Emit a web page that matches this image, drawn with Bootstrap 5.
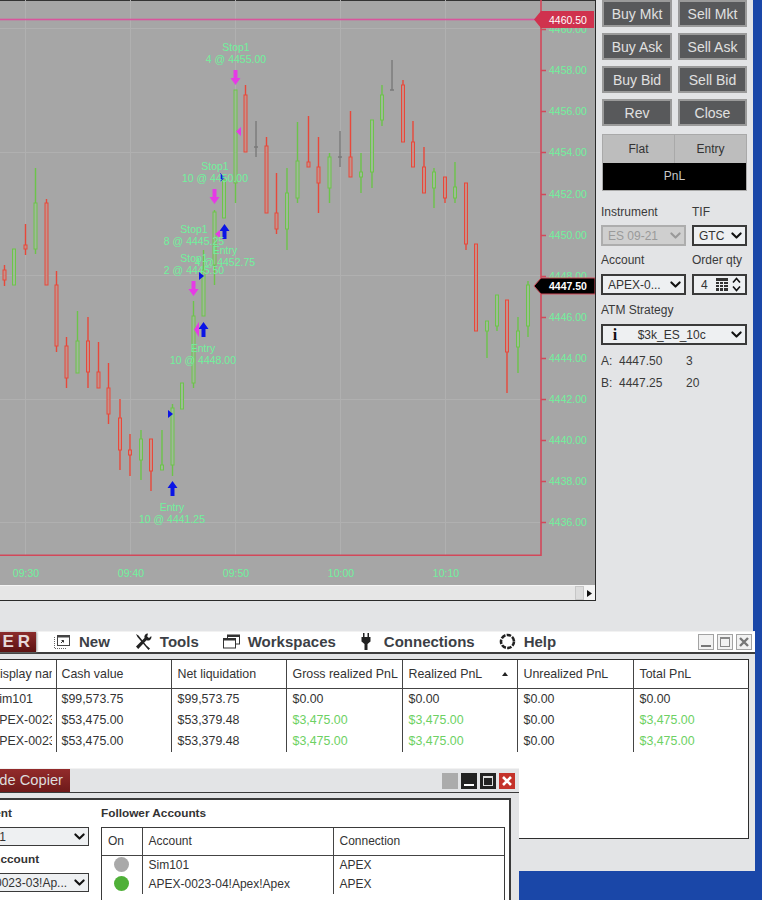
<!DOCTYPE html>
<html lang="en">
<head>
<meta charset="utf-8">
<title>Trading workspace</title>
<link href="https://cdn.jsdelivr.net/npm/bootstrap@5.3.0/dist/css/bootstrap.min.css" rel="stylesheet">
<style>
html,body{margin:0;height:100%;overflow:hidden}
body{background:#1a47a8;font-family:"Liberation Sans",Arial,sans-serif;font-size:12px;color:#333}
.desk{position:relative;width:762px;height:900px;overflow:hidden;background:#1a47a8}
.win-main{position:absolute;left:0;top:0;width:753px;height:632px;background:#e3e4e6}
.chart-box{width:596px;height:601px;border-right:1px solid #2a2a2a;border-bottom:1px solid #2a2a2a;background:#e6e6e6;flex:none}
.chart-box svg{display:block}
.scroll-strip{height:15px;border-top:1px solid #f4f4f4}
.scroll-thumb{width:9px;height:14px;background:#dcdcdc;border:1px solid #c6c6c6}
.scroll-arrow{width:11px;height:14px;background:#f4f4f4}
.ctext{font-family:"Liberation Sans",Arial,sans-serif;font-size:10.5px;fill:#70f29c}
.ctext-c{text-anchor:middle}
.c-up,.c-dn,.c-gr{stroke-width:1}
.c-up path,.c-dn path,.c-gr path{stroke-width:1.4}
.c-up{stroke:#6cc44a;fill:#9fba97}
.c-dn{stroke:#e8483a;fill:#c4928b}
.c-gr{stroke:#7a7a7a;fill:#7a7a7a}
.side-panel{width:157px;padding:0 6px 0 5px}
.trade-grid{display:grid;grid-template-columns:70px 69px;column-gap:6px;row-gap:6px;margin-left:1px}
.trade-btn{height:27px;padding:0;border-radius:0;background:#58595b;border:2px solid #9a9a9a;color:#e0e0e0;font-size:14px;line-height:22px}
.pos-box{margin:8px 0 0 1px;border:1px solid #a9a9a9;font-size:12px;text-align:center}
.pos-cell{height:28px;line-height:28px;background:#bdbdbd;color:#333;flex:1 1 0}
.pos-cell+.pos-cell{border-left:1px solid #a9a9a9}
.pos-pnl{height:27px;line-height:27px;background:#000;color:#c9c9c9}
.field-grid{display:grid;grid-template-columns:85px 55px;column-gap:6px;margin-top:14px}
.field-lbl{height:15px;line-height:15px;font-size:12px;color:#3a3a3a;margin-bottom:5px}
.field-next{margin-top:7px;margin-bottom:6px}
.atm-lbl{margin-top:8px;margin-bottom:6px}
.flat-sel{height:21px;min-height:21px;padding:0 16px 0 5px;border:2px solid #3a3a3a;border-radius:0;font-size:12px;color:#333;background-color:#eef0f2;background-image:url("data:image/svg+xml,%3csvg xmlns='http://www.w3.org/2000/svg' viewBox='0 0 16 16'%3e%3cpath fill='none' stroke='%23111' stroke-linecap='round' stroke-linejoin='round' stroke-width='3' d='m2 5 6 6 6-6'/%3e%3c/svg%3e");background-size:11px 11px;background-position:right 3px center;box-shadow:none}
.flat-sel:disabled{background-color:#cfcfcf;border-color:#adadad;color:#9a9a9a;opacity:1;background-image:url("data:image/svg+xml,%3csvg xmlns='http://www.w3.org/2000/svg' viewBox='0 0 16 16'%3e%3cpath fill='none' stroke='%23999' stroke-linecap='round' stroke-linejoin='round' stroke-width='3' d='m2 5 6 6 6-6'/%3e%3c/svg%3e")}
.qty-box{height:21px;border:2px solid #3a3a3a;background:#eef0f2;font-size:12px;padding-left:7px}
.atm-box{height:21px;border:2px solid #3a3a3a;background:#eef0f2}
.atm-info{width:24px;text-align:center;font-family:"Liberation Serif",serif;font-weight:700;font-size:16px;line-height:17px;color:#111;flex:none}
.atm-sel{border:0;height:17px;min-height:17px;text-align:left}
.quote-wrap{margin-top:5px}
.quote-row{display:grid;grid-template-columns:18px 67px auto;height:22px;line-height:22px;font-size:12px;color:#3a3a3a}
.win-cc{position:absolute;left:-60px;top:631px;width:815px;height:240px;background:#e3e4e6;border-top:1px solid #f2f2f2}
.menu-row{height:19px;background:#fff;border-bottom:2px solid #3d3d3d;box-sizing:content-box;padding:0 3px 1px 0}
.cc-tab{width:96px;height:20px;background:linear-gradient(#8c2c2c,#5c1212);color:#e6dada;font-weight:700;font-size:17px;letter-spacing:4px;line-height:20px;padding-right:2px;overflow:hidden;box-shadow:1px 0 2px #999;flex:none;margin-bottom:-1px}
.cc-tab-txt{flex:none;white-space:nowrap}
.menu-list{gap:24px;margin-left:18px;font-weight:700;font-size:15px;color:#3c3f46}
.menu-item{gap:8px;line-height:20px}
.cc-btns{gap:3px}
.wbtn{width:16px;height:16px;display:block}
.frame-tbl{margin:5px 6px 0 0;height:180px;border:1px solid #2e2e2e;border-left:0;background:#fff}
.acct-tbl{table-layout:fixed;width:809px;margin:0;font-size:12.4px;color:#333;--bs-table-bg:transparent}
.acct-tbl th,.acct-tbl td{padding:0 5px 0 6px;white-space:nowrap;overflow:hidden;font-weight:400;border:0;border-right:1px solid #444}
.acct-tbl th:last-child,.acct-tbl td:last-child{border-right:0}
.acct-tbl th{height:28px;border-bottom:1px solid #444;line-height:28px}
.acct-tbl td{height:21px;line-height:21px}
.acct-tbl th:first-child,.acct-tbl td:first-child{padding:0 4px 0 51px}
.acct-tbl th:nth-child(2),.acct-tbl td:nth-child(2){padding-left:5px}
.clip-txt{display:block;overflow:hidden}
.money-up{color:#6dd163!important}
.sort-mark{width:0;height:0;border-left:3.5px solid transparent;border-right:3.5px solid transparent;border-bottom:4px solid #222}
.win-tc{position:absolute;left:-80px;top:768px;width:599px;height:132px;background:#e3e4e6;border-top:1px solid #f2f2f2}
.tc-head{height:24px;border-bottom:1px solid #3a3a3a}
.tc-tab{width:150px;height:23px;background:linear-gradient(#932b2b,#6e1a1a);color:#ddd;font-size:14.7px;line-height:23px;text-align:right;padding-right:7px;white-space:nowrap}
.tc-btns{gap:3px;margin-right:4px}
.tc-panel{margin:5px 8px 0 0;height:120px;border:2px solid #3a3a3a;border-bottom:0;border-left:0;background:#fff;padding:6px 4px 0 31px;gap:12px}
.tc-left{width:138px;flex:none}
.tc-lbl{font-weight:700;font-size:11.8px;line-height:15px;color:#333;margin-bottom:6px}
.tc-sel{height:19px;min-height:19px;padding:0 14px 0 7px;border:1px solid #3a3a3a;margin-bottom:6px}
.tc-sel-first{padding-left:4px}
.tc-right{flex:1 1 auto}
.tc-tbl-frame{border:1px solid #3a3a3a;border-bottom:0;height:90px}
.tc-tbl{table-layout:fixed;width:100%;margin:0;font-size:12px;color:#333;--bs-table-bg:transparent}
.tc-tbl th,.tc-tbl td{padding:0 6px;font-weight:400;border:0;border-right:1px solid #444;white-space:nowrap}
.tc-tbl th:last-child,.tc-tbl td:last-child{border-right:0}
.tc-tbl th{height:27px;line-height:27px;border-bottom:1px solid #444}
.tc-tbl td{height:19px;line-height:19px}
.dot-on,.dot-off{display:block;width:15px;height:15px;border-radius:50%;margin:1px auto 0}
.dot-on{background:#4fb038}
.dot-off{background:#a9a9a9}
</style>
</head>
<body>
<div class="desk">

<section class="win-main d-flex align-items-start">
  <div class="chart-box">
    <svg width="595" height="585" viewBox="0 0 595 585" xmlns="http://www.w3.org/2000/svg" role="img" aria-label="ES candlestick chart">
      <rect width="595" height="585" fill="#a6a6a6"/>
      <rect width="595" height="1" fill="#333"/>
      <g stroke="#b0b0b0" stroke-width="1">
        <path d="M25.5 0V555M130.5 0V555M235.5 0V555M340.5 0V555M445.5 0V555"/>
        <path d="M0 28.5H541M0 152.5H541M0 275.5H541M0 399.5H541M0 522.5H541"/>
      </g>
      <rect x="0" y="18.700" width="535" height="1.600" fill="#d8559c"/>
      <g class="c-dn">
        <path d="M4.500 265V286"/><rect x="3" y="270" width="3" height="10"/>
        <path d="M25.500 224V255"/><rect x="24" y="245" width="3" height="4"/>
        <path d="M46.500 199V285"/><rect x="45" y="203" width="3" height="82"/>
        <path d="M56.500 271V352"/><rect x="55" y="285" width="3" height="61"/>
        <path d="M66.500 337V388"/><rect x="65" y="346" width="3" height="32"/>
        <path d="M88 317V388"/><rect x="86.500" y="341" width="3" height="31"/>
        <path d="M98.500 342V388"/><rect x="97" y="372" width="3" height="16"/>
        <path d="M108.500 363V424"/><rect x="107" y="388" width="3" height="26"/>
        <path d="M120 399V470"/><rect x="118.500" y="418" width="3" height="32"/>
        <path d="M130 434V476"/><rect x="128.500" y="450" width="3" height="5"/>
        <path d="M151 439V491"/><rect x="149.500" y="439" width="3" height="32"/>
        <path d="M245.500 85V152"/><rect x="244" y="95" width="3" height="57"/>
        <path d="M266.500 137V213"/><rect x="265" y="146" width="3" height="67"/>
        <path d="M276.500 173V234"/><rect x="275" y="213" width="3" height="16"/>
        <path d="M308.500 116V167"/><rect x="307" y="162" width="3" height="5"/>
        <path d="M318.500 137V213"/><rect x="317" y="167" width="3" height="16"/>
        <path d="M350.500 111V177"/><rect x="349" y="157" width="3" height="20"/>
        <path d="M403 80V142"/><rect x="401.500" y="85" width="3" height="57"/>
        <path d="M413 121V167"/><rect x="411.500" y="142" width="3" height="25"/>
        <path d="M424 147V193"/><rect x="422.500" y="167" width="3" height="26"/>
        <path d="M445 177V203"/><rect x="443.500" y="177" width="3" height="21"/>
        <path d="M466 183V250"/><rect x="464.500" y="183" width="3" height="61"/>
        <rect x="474.500" y="244" width="3" height="87"/>
        <path d="M507 300V393"/><rect x="505.500" y="300" width="3" height="52"/>
      </g>
      <g class="c-up">
        <rect x="12.500" y="249" width="3" height="36"/>
        <path d="M35.500 168V254"/><rect x="34" y="203" width="3" height="46"/>
        <path d="M77.500 311V373"/><rect x="76" y="341" width="3" height="32"/>
        <path d="M141 430V480"/><rect x="139.500" y="439" width="3" height="21"/>
        <path d="M162 430V470"/><rect x="160.500" y="465" width="3" height="5"/>
        <path d="M172.500 404V476"/><rect x="171" y="408" width="3" height="57"/>
        <rect x="180.500" y="383" width="3" height="26"/>
        <path d="M193.500 301V388"/><rect x="192" y="316" width="3" height="67"/>
        <path d="M203.500 250V316"/><rect x="202" y="270" width="3" height="46"/>
        <path d="M214.500 210V285"/><rect x="213" y="212" width="3" height="53"/>
        <rect x="222.500" y="180" width="3" height="38"/>
        <path d="M235.500 90V203"/><rect x="234" y="90" width="3" height="93"/>
        <path d="M287 168V250"/><rect x="285.500" y="193" width="3" height="36"/>
        <path d="M297.500 122V203"/><rect x="296" y="161" width="3" height="37"/>
        <path d="M329.500 153V203"/><rect x="328" y="157" width="3" height="31"/>
        <path d="M361 153V193"/><rect x="359.500" y="172" width="3" height="5"/>
        <path d="M372 120V188"/><rect x="370.500" y="120" width="3" height="52"/>
        <path d="M382 85V126"/><rect x="380.500" y="95" width="3" height="25"/>
        <path d="M434 168V208"/><rect x="432.500" y="172" width="3" height="16"/>
        <path d="M455 162V203"/><rect x="453.500" y="187" width="3" height="11"/>
        <path d="M487 321V358"/><rect x="485.500" y="321" width="3" height="10"/>
        <path d="M497 295V331"/><rect x="495.500" y="295" width="3" height="31"/>
        <path d="M518 317V373"/><rect x="516.500" y="331" width="3" height="16"/>
        <path d="M528 281V337"/><rect x="526.500" y="285" width="3" height="41"/>
      </g>
      <g class="c-gr">
        <path d="M256 121V157M254 147H258"/>
        <path d="M340 131V167M338 157H342"/>
        <path d="M392 60V90M390 90H394"/>
      </g>
      <path d="M541 0V555.300H0" stroke="#d2485a" stroke-width="1.600" fill="none"/>
      <path d="M541 29.500h5M541 70.500h5M541 111.500h5M541 152.500h5M541 194.500h5M541 235.500h5M541 276.500h5M541 317.500h5M541 358.500h5M541 399.500h5M541 440.500h5M541 481.500h5M541 522.500h5" stroke="#d2485a" stroke-width="1.300"/>
      <g class="ctext">
        <text x="549" y="33">4460.00</text><text x="549" y="74">4458.00</text><text x="549" y="115">4456.00</text>
        <text x="549" y="156">4454.00</text><text x="549" y="198">4452.00</text><text x="549" y="239">4450.00</text>
        <text x="549" y="280">4448.00</text><text x="549" y="321">4446.00</text><text x="549" y="362">4444.00</text>
        <text x="549" y="403">4442.00</text><text x="549" y="444">4440.00</text><text x="549" y="485">4438.00</text>
        <text x="549" y="526">4436.00</text>
      </g>
      <g class="ctext ctext-c">
        <text x="26" y="577">09:30</text><text x="131" y="577">09:40</text><text x="236" y="577">09:50</text>
        <text x="341" y="577">10:00</text><text x="446" y="577">10:10</text>
      </g>
      <polygon points="534,19.500 541,11 594,11 594,28 541,28" fill="#d0324e"/>
      <text x="549" y="23.500" class="ctext" style="fill:#fff">4460.50</text>
      <polygon points="534,286 541,278 595,278 595,294 541,294" fill="#000" stroke="#cf4a58"/>
      <text x="549" y="290" class="ctext" style="fill:#fff;font-weight:700">4447.50</text>
      <g fill="#0a14e6">
        <path d="M172.500 481l-5 7h3v8h4v-8h3z"/>
        <path d="M203.500 322l-5 7h3v8h4v-8h3z"/>
        <path d="M224.500 224l-5 7h3v8h4v-8h3z"/>
        <path d="M168 410l5 4-5 4z"/>
        <path d="M199 272l5 4-5 4z"/>
        <path d="M220 173l5 4.500-5 4.500z"/>
      </g>
      <g fill="#e63ae6">
        <path d="M235.500 85l-5-7h3v-8h4v8h3z"/>
        <path d="M214.500 204l-5-7h3v-8h4v8h3z"/>
        <path d="M193.500 296l-5-7h3v-8h4v8h3z"/>
        <path d="M241 127l-5 4.500 5 4.500z"/>
        <path d="M220 230l-5 4 5 4z"/>
        <path d="M199 322l-5 7.500 5 7.500z"/>
      </g>
      <g class="ctext ctext-c">
        <text x="236" y="51">Stop1</text><text x="236" y="63">4 @ 4455.00</text>
        <text x="215" y="170">Stop1</text><text x="215" y="182">10 @ 4450.00</text>
        <text x="194" y="233">Stop1</text><text x="194" y="245">8 @ 4445.25</text>
        <text x="225" y="254">Entry</text><text x="225" y="266">4 @ 4452.75</text>
        <text x="194" y="262">Stop1</text><text x="194" y="274">2 @ 4445.50</text>
        <text x="203" y="352">Entry</text><text x="203" y="364">10 @ 4448.00</text>
        <text x="172" y="511">Entry</text><text x="172" y="523">10 @ 4441.25</text>
      </g>
    </svg>
    <div class="scroll-strip d-flex justify-content-end">
      <span class="scroll-thumb"></span>
      <span class="scroll-arrow d-flex align-items-center justify-content-center">
        <svg width="5" height="7" viewBox="0 0 5 7"><path d="M0 0l5 3.500-5 3.500z" fill="#111"/></svg>
      </span>
    </div>
  </div>

  <aside class="side-panel">
    <div class="trade-grid">
      <button type="button" class="btn trade-btn">Buy Mkt</button>
      <button type="button" class="btn trade-btn">Sell Mkt</button>
      <button type="button" class="btn trade-btn">Buy Ask</button>
      <button type="button" class="btn trade-btn">Sell Ask</button>
      <button type="button" class="btn trade-btn">Buy Bid</button>
      <button type="button" class="btn trade-btn">Sell Bid</button>
      <button type="button" class="btn trade-btn">Rev</button>
      <button type="button" class="btn trade-btn">Close</button>
    </div>
    <div class="pos-box">
      <div class="d-flex"><div class="pos-cell">Flat</div><div class="pos-cell">Entry</div></div>
      <div class="pos-pnl">PnL</div>
    </div>
    <div class="field-grid">
      <div class="field-lbl">Instrument</div><div class="field-lbl">TIF</div>
      <select class="form-select flat-sel" disabled aria-label="Instrument"><option>ES 09-21</option></select>
      <select class="form-select flat-sel" aria-label="TIF"><option>GTC</option></select>
      <div class="field-lbl field-next">Account</div><div class="field-lbl field-next">Order qty</div>
      <select class="form-select flat-sel" aria-label="Account"><option>APEX-0...</option></select>
      <div class="qty-box d-flex align-items-center">
        <span class="flex-grow-1">4</span>
        <svg width="12" height="13" viewBox="0 0 12 13" class="me-1"><path d="M0 0h12v3H0zM0 4h3v2H0zM4 4h3v2H4zM8 4h4v2H8zM0 7h3v2H0zM4 7h3v2H4zM8 7h4v2H8zM0 10h3v3H0zM4 10h3v3H4zM8 10h4v3H8z" fill="#333"/></svg>
        <svg width="9" height="15" viewBox="0 0 9 15" class="me-1"><path d="M1 5.500l3.500-4 3.500 4M1 9.500l3.500 4 3.500-4" fill="none" stroke="#111" stroke-width="1.600"/></svg>
      </div>
    </div>
    <div class="field-lbl atm-lbl">ATM Strategy</div>
    <div class="atm-box d-flex align-items-center">
      <span class="atm-info">i</span>
      <select class="form-select flat-sel atm-sel ps-1" aria-label="ATM Strategy"><option>&nbsp;&nbsp;$3k_ES_10c</option></select>
    </div>
    <div class="quote-wrap">
      <div class="quote-row"><span>A:</span><span>4447.50</span><span>3</span></div>
      <div class="quote-row"><span>B:</span><span>4447.25</span><span>20</span></div>
    </div>
  </aside>
</section>

<section class="win-cc">
  <div class="menu-row d-flex align-items-center">
    <div class="cc-tab d-flex justify-content-end"><span class="cc-tab-txt">CONTROL CENTER</span></div>
    <div class="menu-list d-flex align-items-center">
      <div class="menu-item d-flex align-items-center">
        <svg width="17" height="15" viewBox="0 0 17 15"><rect x="3.500" y="1.500" width="12" height="10" fill="#fff" stroke="#444"/><path d="M3 1h13v2.500H3z" fill="#444"/><path d="M7 9l2.500-2.500M7.500 6.500h2v2" stroke="#333" fill="none"/><path d="M.5 3v11.500H13" stroke="#666" stroke-dasharray="1 1" fill="none"/></svg>
        <span>New</span>
      </div>
      <div class="menu-item d-flex align-items-center">
        <svg width="18" height="17" viewBox="0 0 18 17"><path d="M2 1l2.500 1.500 8 10 3.500 3-1.500 1.500-3-3.500-8-9.500z" fill="#222"/><path d="M14 .5a3.500 3.500 0 0 0-3.500 4.500L2 13.500 4.200 16l8.300-8.800A3.500 3.500 0 0 0 17.300 3l-2.300 2-1.800-1.500z" fill="#222"/></svg>
        <span>Tools</span>
      </div>
      <div class="menu-item d-flex align-items-center">
        <svg width="17" height="15" viewBox="0 0 17 15"><rect x="4.500" y="1" width="12" height="9" fill="#fff" stroke="#333"/><path d="M4.500 1h12v2h-12z" fill="#333"/><rect x=".5" y="4.500" width="12" height="9.500" fill="#fff" stroke="#333"/><path d="M.5 4.500h12v2H.5z" fill="#333"/></svg>
        <span>Workspaces</span>
      </div>
      <div class="menu-item d-flex align-items-center">
        <svg width="12" height="17" viewBox="0 0 12 17"><path d="M3 0h1.500v4H3zM7.500 0H9v4H7.500zM1.500 4h9v4.500L7.500 11v6h-3v-6l-3-2.500z" fill="#222"/></svg>
        <span class="ms-1">Connections</span>
      </div>
      <div class="menu-item d-flex align-items-center">
        <svg width="17" height="17" viewBox="0 0 17 17"><circle cx="8.500" cy="8.500" r="6.500" fill="none" stroke="#222" stroke-width="2.600" stroke-dasharray="4.500 1.300"/></svg>
        <span>Help</span>
      </div>
    </div>
    <div class="ms-auto d-flex cc-btns">
      <svg class="wbtn" viewBox="0 0 16 16"><rect x=".5" y=".5" width="15" height="15" fill="#f2f2f2" stroke="#a3a3a3"/><path d="M3 12h10" stroke="#777" stroke-width="2"/></svg>
      <svg class="wbtn" viewBox="0 0 16 16"><rect x=".5" y=".5" width="15" height="15" fill="#f2f2f2" stroke="#a3a3a3"/><rect x="3.500" y="3.500" width="9" height="9" fill="none" stroke="#888"/><path d="M3 4h10" stroke="#888" stroke-width="2"/></svg>
      <svg class="wbtn" viewBox="0 0 16 16"><rect x=".5" y=".5" width="15" height="15" fill="#f2f2f2" stroke="#a3a3a3"/><path d="M4 4l8 8M12 4l-8 8" stroke="#777" stroke-width="2.400"/></svg>
    </div>
  </div>
  <div class="frame-tbl">
    <table class="table acct-tbl">
      <colgroup><col style="width:116px"><col style="width:115px"><col style="width:115px"><col style="width:116px"><col style="width:115px"><col style="width:116px"><col></colgroup>
      <thead>
        <tr><th><span class="clip-txt">Display name</span></th><th>Cash value</th><th>Net liquidation</th><th>Gross realized PnL</th><th><span class="d-flex justify-content-between align-items-center">Realized PnL<span class="sort-mark me-1"></span></span></th><th>Unrealized PnL</th><th>Total PnL</th></tr>
      </thead>
      <tbody>
        <tr><td><span class="clip-txt">Sim101</span></td><td>$99,573.75</td><td>$99,573.75</td><td>$0.00</td><td>$0.00</td><td>$0.00</td><td>$0.00</td></tr>
        <tr><td><span class="clip-txt">APEX-0023-03!Apex</span></td><td>$53,475.00</td><td>$53,379.48</td><td class="money-up">$3,475.00</td><td class="money-up">$3,475.00</td><td>$0.00</td><td class="money-up">$3,475.00</td></tr>
        <tr><td><span class="clip-txt">APEX-0023-04!Apex</span></td><td>$53,475.00</td><td>$53,379.48</td><td class="money-up">$3,475.00</td><td class="money-up">$3,475.00</td><td>$0.00</td><td class="money-up">$3,475.00</td></tr>
      </tbody>
    </table>
  </div>
</section>

<section class="win-tc">
  <div class="tc-head d-flex justify-content-between">
    <div class="tc-tab">Trade Copier</div>
    <div class="tc-btns d-flex align-items-center">
      <svg class="wbtn" viewBox="0 0 16 16"><rect width="16" height="16" fill="#ababab"/></svg>
      <svg class="wbtn" viewBox="0 0 16 16"><rect width="16" height="16" fill="#222"/><path d="M3 12h10" stroke="#fff" stroke-width="2"/></svg>
      <svg class="wbtn" viewBox="0 0 16 16"><rect width="16" height="16" fill="#222"/><rect x="3.500" y="3.500" width="9" height="9" fill="none" stroke="#ddd"/><path d="M3 4h10" stroke="#ddd" stroke-width="2"/></svg>
      <svg class="wbtn" viewBox="0 0 16 16"><rect width="16" height="16" fill="#c4322a"/><path d="M4 4l8 8M12 4l-8 8" stroke="#fff" stroke-width="2.600"/></svg>
    </div>
  </div>
  <div class="tc-panel d-flex">
    <div class="tc-left">
      <div class="tc-lbl">Instrument</div>
      <select class="form-select flat-sel tc-sel tc-sel-first" aria-label="Instrument"><option>ES 09-21</option></select>
      <div class="tc-lbl">Master Account</div>
      <select class="form-select flat-sel tc-sel" aria-label="Master Account"><option>APEX-0023-03!Ap...</option></select>
    </div>
    <div class="tc-right">
      <div class="tc-lbl">Follower Accounts</div>
      <div class="tc-tbl-frame">
        <table class="table tc-tbl">
          <colgroup><col style="width:40px"><col style="width:191px"><col></colgroup>
          <thead><tr><th>On</th><th>Account</th><th>Connection</th></tr></thead>
          <tbody>
            <tr><td><span class="dot-off"></span></td><td>Sim101</td><td>APEX</td></tr>
            <tr><td><span class="dot-on"></span></td><td>APEX-0023-04!Apex!Apex</td><td>APEX</td></tr>
          </tbody>
        </table>
      </div>
    </div>
  </div>
</section>

</div>
<script src="https://cdn.jsdelivr.net/npm/bootstrap@5.3.0/dist/js/bootstrap.bundle.min.js"></script>
</body>
</html>
